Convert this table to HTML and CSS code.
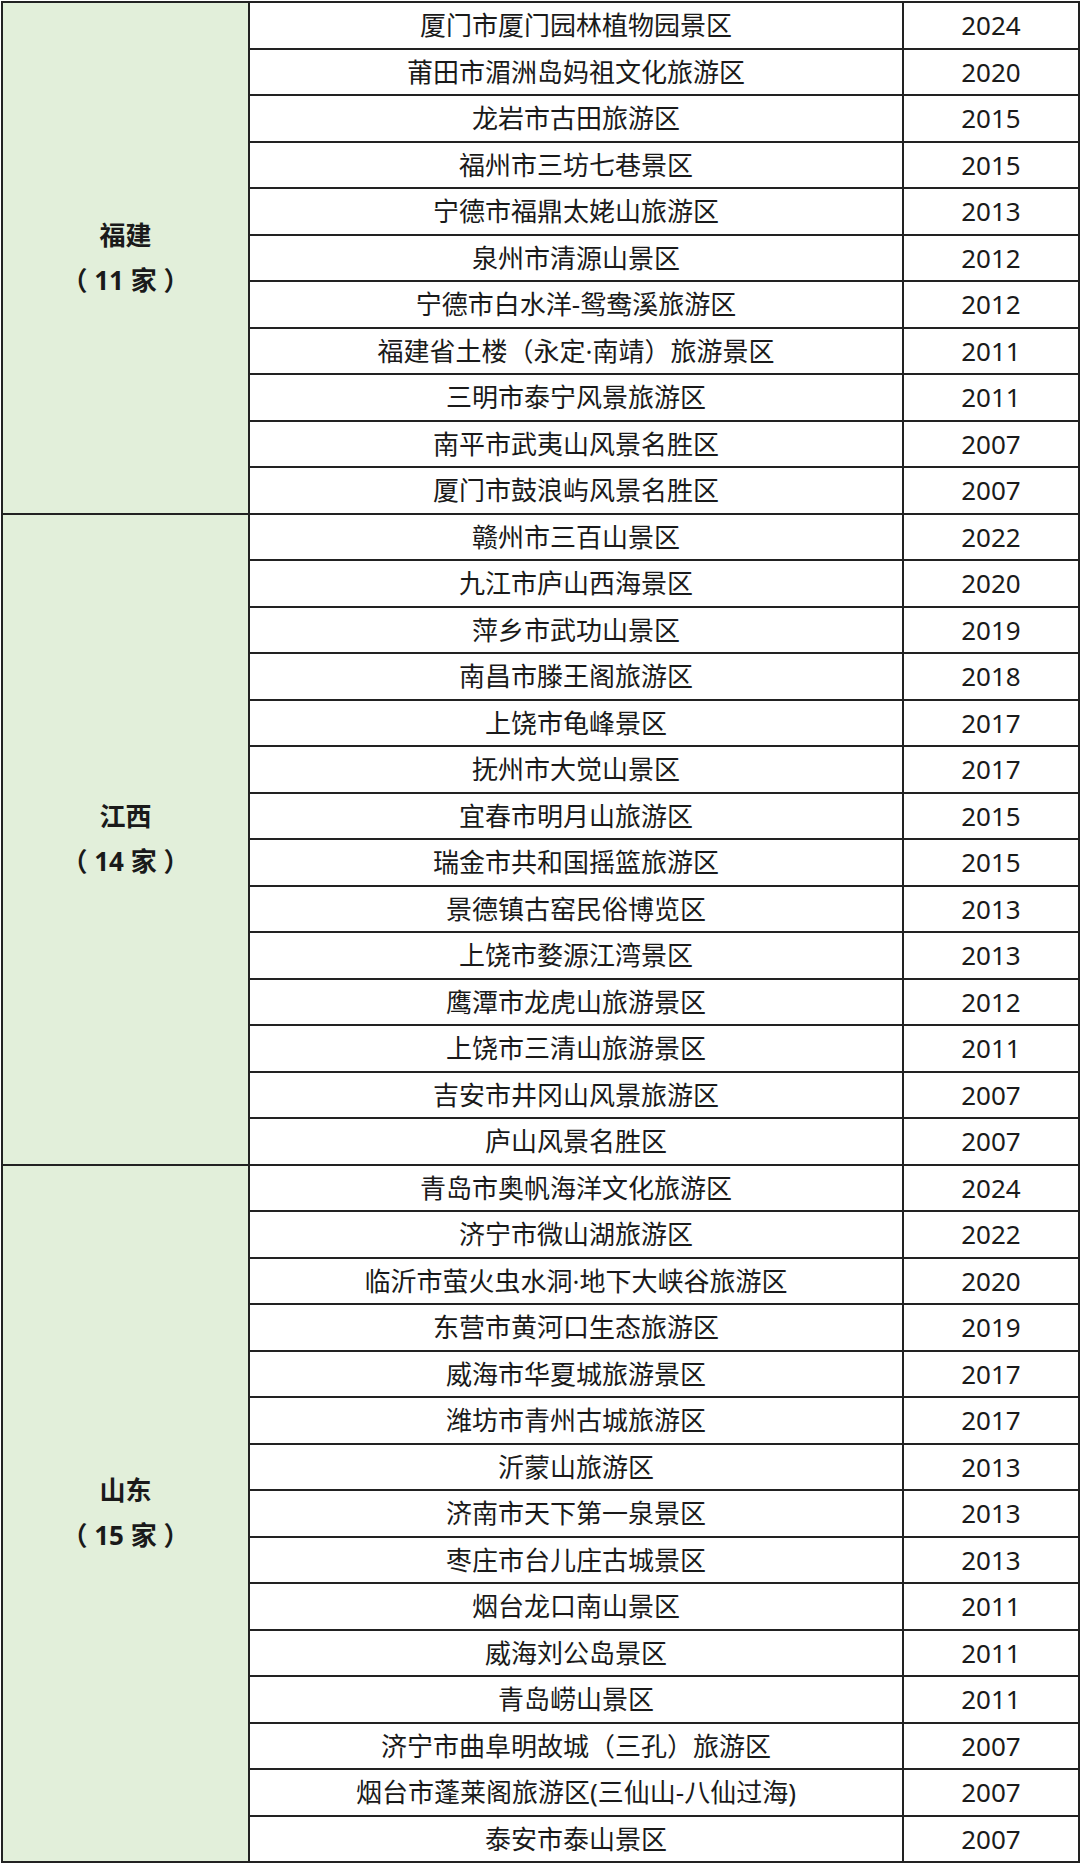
FILE: index.html
```html
<!DOCTYPE html>
<html lang="zh-CN">
<head>
<meta charset="utf-8">
<link rel="stylesheet" href="styles.css">
</head>
<body>
<table class="sites">
<colgroup><col class="c-prov"><col class="c-name"><col class="c-year"></colgroup>
<tbody>
<tr><td class="prov" rowspan="11"><div class="prov-name">福建</div><div class="prov-count">（ 11 家 ）</div></td><td>厦门市厦门园林植物园景区</td><td>2024</td></tr>
<tr><td>莆田市湄洲岛妈祖文化旅游区</td><td>2020</td></tr>
<tr><td>龙岩市古田旅游区</td><td>2015</td></tr>
<tr><td>福州市三坊七巷景区</td><td>2015</td></tr>
<tr><td>宁德市福鼎太姥山旅游区</td><td>2013</td></tr>
<tr><td>泉州市清源山景区</td><td>2012</td></tr>
<tr><td>宁德市白水洋-鸳鸯溪旅游区</td><td>2012</td></tr>
<tr><td>福建省土楼（永定·南靖）旅游景区</td><td>2011</td></tr>
<tr><td>三明市泰宁风景旅游区</td><td>2011</td></tr>
<tr><td>南平市武夷山风景名胜区</td><td>2007</td></tr>
<tr><td>厦门市鼓浪屿风景名胜区</td><td>2007</td></tr>

<tr><td class="prov" rowspan="14"><div class="prov-name">江西</div><div class="prov-count">（ 14 家 ）</div></td><td>赣州市三百山景区</td><td>2022</td></tr>
<tr><td>九江市庐山西海景区</td><td>2020</td></tr>
<tr><td>萍乡市武功山景区</td><td>2019</td></tr>
<tr><td>南昌市滕王阁旅游区</td><td>2018</td></tr>
<tr><td>上饶市龟峰景区</td><td>2017</td></tr>
<tr><td>抚州市大觉山景区</td><td>2017</td></tr>
<tr><td>宜春市明月山旅游区</td><td>2015</td></tr>
<tr><td>瑞金市共和国摇篮旅游区</td><td>2015</td></tr>
<tr><td>景德镇古窑民俗博览区</td><td>2013</td></tr>
<tr><td>上饶市婺源江湾景区</td><td>2013</td></tr>
<tr><td>鹰潭市龙虎山旅游景区</td><td>2012</td></tr>
<tr><td>上饶市三清山旅游景区</td><td>2011</td></tr>
<tr><td>吉安市井冈山风景旅游区</td><td>2007</td></tr>
<tr><td>庐山风景名胜区</td><td>2007</td></tr>

<tr><td class="prov" rowspan="15"><div class="prov-name">山东</div><div class="prov-count">（ 15 家 ）</div></td><td>青岛市奥帆海洋文化旅游区</td><td>2024</td></tr>
<tr><td>济宁市微山湖旅游区</td><td>2022</td></tr>
<tr><td>临沂市萤火虫水洞·地下大峡谷旅游区</td><td>2020</td></tr>
<tr><td>东营市黄河口生态旅游区</td><td>2019</td></tr>
<tr><td>威海市华夏城旅游景区</td><td>2017</td></tr>
<tr><td>潍坊市青州古城旅游区</td><td>2017</td></tr>
<tr><td>沂蒙山旅游区</td><td>2013</td></tr>
<tr><td>济南市天下第一泉景区</td><td>2013</td></tr>
<tr><td>枣庄市台儿庄古城景区</td><td>2013</td></tr>
<tr><td>烟台龙口南山景区</td><td>2011</td></tr>
<tr><td>威海刘公岛景区</td><td>2011</td></tr>
<tr><td>青岛崂山景区</td><td>2011</td></tr>
<tr><td>济宁市曲阜明故城（三孔）旅游区</td><td>2007</td></tr>
<tr><td>烟台市蓬莱阁旅游区(三仙山-八仙过海)</td><td>2007</td></tr>
<tr><td>泰安市泰山景区</td><td>2007</td></tr>
</tbody>
</table>
</body>
</html>
```
FILE: styles.css
```css
html, body {
  margin: 0;
  padding: 0;
  background: #ffffff;
}

body {
  padding: 1px 0 0 1px;
  font-family: "Noto Sans", "Noto Sans CJK SC", sans-serif;
  color: #1a1a1a;
}

.sites {
  border-collapse: collapse;
  table-layout: fixed;
  width: 1077px;
  border: 2px solid #222;
}

.c-prov { width: 247px; }
.c-name { width: 654px; }
.c-year { width: 176px; }

.sites td {
  border: 2px solid #222;
  height: 46.5px;
  padding: 0;
  box-sizing: border-box;
  text-align: center;
  vertical-align: middle;
  font-size: 26px;
  line-height: 30px;
  white-space: nowrap;
}

.sites td.prov {
  background: #e2efda;
  font-weight: 700;
}

.prov-name,
.prov-count {
  line-height: 45px;
  white-space: pre;
}
```
